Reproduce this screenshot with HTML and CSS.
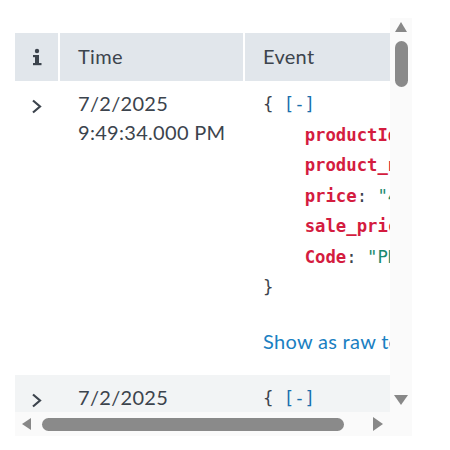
FILE: index.html
```html
<!DOCTYPE html>
<html>
<head>
<meta charset="utf-8">
<link rel="stylesheet" href="styles.css">
</head>
<body>
<div class="frame">
  <div class="viewport">
    <div class="table">
      <div class="thead">
        <div class="th c1">
          <svg class="info" width="10" height="18" viewBox="0 0 10 18"><circle cx="5" cy="3" r="2.2"/><rect x="1" y="7" width="5" height="2.2"/><rect x="3" y="7" width="4" height="10"/><rect x="1" y="15" width="8.5" height="2.2"/></svg>
        </div>
        <div class="th c2">Time</div>
        <div class="th c3">Event</div>
      </div>
      <div class="row">
        <div class="td c1 expand">
          <svg width="11" height="15" viewBox="0 0 11 15"><polyline points="2,1.5 9,7.5 2,13.5"/></svg>
        </div>
        <div class="td c2 time"><div>7/2/2025</div><div>9:49:34.000 PM</div></div>
        <div class="td c3 event">
<pre class="json">{ <span class="br">[-]</span>
    <span class="k">productId</span>: <span class="s">"1042"</span>
    <span class="k">product_name</span>: <span class="s">"Wireless Mouse"</span>
    <span class="k">price</span>: <span class="s">"49.99"</span>
    <span class="k">sale_price</span>: <span class="s">"39.99"</span>
    <span class="k">Code</span>: <span class="s">"PROMO10"</span>
}</pre>
          <a class="raw">Show as raw text</a>
        </div>
      </div>
      <div class="row alt">
        <div class="td c1 expand">
          <svg width="11" height="15" viewBox="0 0 11 15"><polyline points="2,1.5 9,7.5 2,13.5"/></svg>
        </div>
        <div class="td c2 time"><div>7/2/2025</div><div>9:49:33.000 PM</div></div>
        <div class="td c3 event">
<pre class="json">{ <span class="br">[-]</span>
    <span class="k">productId</span>: <span class="s">"1041"</span>
}</pre>
        </div>
      </div>
    </div>
  </div>
  <div class="vbar">
    <div class="arrow up"></div>
    <div class="vthumb"></div>
    <div class="fill"></div>
    <div class="arrow down"></div>
  </div>
  <div class="hbar">
    <div class="arrow left"></div>
    <div class="hthumb"></div>
    <div class="fill"></div>
    <div class="arrow right"></div>
  </div>
  <div class="corner"></div>
</div>
</body>
</html>
```
FILE: styles.css
```css
body {
  margin: 0;
  background: #ffffff;
  font-family: Lato, "Open Sans", sans-serif;
  color: #3c444d;
  letter-spacing: 0.3px;
}

.frame {
  margin: 18px 0 0 15px;
  display: grid;
  grid-template-columns: 375px 22px;
  grid-template-rows: 394px 24px;
  width: 397px;
}

.viewport {
  overflow: hidden;
  padding-top: 15px;
  box-sizing: border-box;
}

.table {
  width: 420px;
}

.thead,
.row {
  display: grid;
  grid-template-columns: 43px 183px 190px;
  column-gap: 2px;
}

.thead {
  height: 48px;
}

.th {
  background: #e1e6eb;
  display: flex;
  align-items: center;
  font-size: 20px;
  padding: 0 0 2px 18px;
}

.th.c1 {
  padding: 0 0 0 17px;
}

.info {
  fill: #3c444d;
}

.row.alt {
  background: #f2f4f5;
}

.expand {
  padding: 18px 0 0 16px;
}

.expand svg {
  display: block;
  fill: none;
  stroke: #3c444d;
  stroke-width: 2.2;
}

.time {
  padding: 8px 0 0 18px;
  font-size: 20px;
  line-height: 29px;
  white-space: nowrap;
}

.event {
  padding: 8px 0 19px 18px;
  white-space: nowrap;
}

.json {
  margin: 0;
  font-family: "DejaVu Sans Mono", monospace;
  font-size: 17.3px;
  line-height: 30.5px;
  letter-spacing: 0;
  color: #3c444d;
}

.json .k {
  color: #d41c3f;
  font-weight: bold;
}

.json .s {
  color: #1a8a6e;
}

.json .br {
  color: #1a6fae;
}

.raw {
  display: block;
  margin-top: 24.5px;
  font-size: 20px;
  line-height: 29px;
  color: #1a80c2;
}

.vbar {
  background: #fafafa;
  display: flex;
  flex-direction: column;
  align-items: center;
  padding: 4px 0 7px;
}

.vthumb {
  margin-top: 9px;
  width: 13px;
  height: 46px;
  border-radius: 7px;
  background: #8a8a8a;
}

.hbar {
  background: #fafafa;
  display: flex;
  align-items: center;
  padding: 0 7px;
}

.hthumb {
  margin-left: 11px;
  width: 302px;
  height: 13px;
  border-radius: 7px;
  background: #8a8a8a;
}

.fill {
  flex: 1;
}

.corner {
  background: #fafafa;
}

.arrow {
  width: 0;
  height: 0;
}

.arrow.up {
  border-left: 6px solid transparent;
  border-right: 6px solid transparent;
  border-bottom: 10px solid #888888;
}

.arrow.down {
  border-left: 7px solid transparent;
  border-right: 7px solid transparent;
  border-top: 10px solid #888888;
}

.arrow.left {
  border-top: 6px solid transparent;
  border-bottom: 6px solid transparent;
  border-right: 9px solid #888888;
}

.arrow.right {
  border-top: 7px solid transparent;
  border-bottom: 7px solid transparent;
  border-left: 10px solid #888888;
}
```
